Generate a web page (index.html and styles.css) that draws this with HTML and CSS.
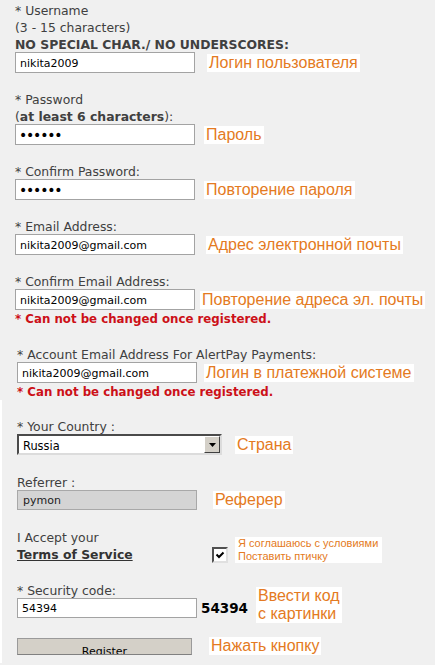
FILE: index.html
```html
<!DOCTYPE html>
<html lang="en">
<head>
<meta charset="utf-8">
<title>Registration</title>
<link rel="stylesheet" href="styles.css">
</head>
<body>
<form class="form">
  <div class="upper">
    <div class="field first">
      <div class="label">* Username</div>
      <div class="label">(3 - 15 characters)</div>
      <div class="label strong">NO SPECIAL CHAR./ NO UNDERSCORES:</div>
      <div class="row">
        <input class="input" type="text" value="nikita2009" readonly>
        <span class="note gap-12">Логин пользователя</span>
      </div>
    </div>
    <div class="field">
      <div class="label">* Password</div>
      <div class="label">(<b>at least 6 characters</b>):</div>
      <div class="row">
        <input class="input pass" type="password" value="123456" readonly>
        <span class="note gap-9">Пароль</span>
      </div>
    </div>
    <div class="field">
      <div class="label">* Confirm Password:</div>
      <div class="row">
        <input class="input pass" type="password" value="123456" readonly>
        <span class="note gap-9">Повторение пароля</span>
      </div>
    </div>
    <div class="field">
      <div class="label">* Email Address:</div>
      <div class="row">
        <input class="input" type="text" value="nikita2009@gmail.com" readonly>
        <span class="note gap-11">Адрес электронной почты</span>
      </div>
    </div>
    <div class="field">
      <div class="label">* Confirm Email Address:</div>
      <div class="row">
        <input class="input" type="text" value="nikita2009@gmail.com" readonly>
        <span class="note gap-5">Повторение адреса эл. почты</span>
      </div>
      <div class="warn">* Can not be changed once registered.</div>
    </div>
  </div>

  <div class="mid">
    <div class="field wide">
      <div class="label">* Account Email Address For AlertPay Payments:</div>
      <div class="row">
        <input class="input" type="text" value="nikita2009@gmail.com" readonly>
        <span class="note gap-7">Логин в платежной системе</span>
      </div>
      <div class="warn">* Can not be changed once registered.</div>
    </div>
  </div>

  <div class="lower">
    <div class="field country">
      <div class="label">* Your Country :</div>
      <div class="row">
        <div class="select">
          <span class="select-value">Russia</span>
          <span class="select-btn">
            <svg width="7" height="4" viewBox="0 0 7 4"><path d="M0 0H7L3.5 4Z" fill="#000"/></svg>
          </span>
        </div>
        <span class="note gap-13">Страна</span>
      </div>
    </div>
    <div class="field wide">
      <div class="label">Referrer :</div>
      <div class="row">
        <input class="input short disabled" type="text" value="pymon" readonly>
        <span class="note gap-16">Реферер</span>
      </div>
    </div>
    <div class="field wide">
      <div class="terms">
        <div class="terms-text">
          <div class="label">I Accept your</div>
          <div class="label"><a class="tos" href="#">Terms of Service</a></div>
        </div>
        <span class="checkbox">
          <svg width="12" height="12" viewBox="0 0 12 12"><path d="M2.5 5.5L5 8L9.5 3.5" fill="none" stroke="#000" stroke-width="2"/></svg>
        </span>
        <span class="note small gap-7">Я соглашаюсь с условиями<br>Поставить птичку</span>
      </div>
    </div>
    <div class="field wide">
      <div class="label">* Security code:</div>
      <div class="row">
        <input class="input short" type="text" value="54394" readonly>
        <span class="captcha">54394</span>
        <span class="note tall gap-8">Ввести код<br>с картинки</span>
      </div>
    </div>
    <div class="field wide">
      <div class="row flat">
        <button class="btn" type="button">Register</button>
        <span class="note gap-17">Нажать кнопку</span>
      </div>
    </div>
  </div>
</form>
</body>
</html>
```

FILE: styles.css
```css
html, body {
  margin: 0;
  padding: 0;
  background: #f0f0f0;
}

body {
  font-family: "DejaVu Sans", Verdana, sans-serif;
  font-size: 12.4px;
  color: #404040;
  height: 665px;
  overflow: hidden;
}

.form {
  margin: 0;
}

.upper {
  padding: 2px 0 0 15px;
}

.mid {
  padding-left: 17px;
}

.lower {
  border-left: 2px solid #fff;
  padding: 3px 0 0 15px;
  min-height: 260px;
}

.field {
  margin-top: 18px;
}

.field.first {
  margin-top: 0;
}

.field.wide {
  margin-top: 19px;
}

.field.country {
  margin-top: 15px;
}

.label {
  line-height: 17px;
  white-space: nowrap;
}

.label.strong,
.label b {
  font-weight: bold;
}

.row {
  display: flex;
  align-items: center;
  margin-top: -1px;
}

.row.flat {
  margin-top: 0;
}

.input {
  box-sizing: border-box;
  width: 180px;
  height: 21px;
  margin: 0;
  padding: 1px 4px 0;
  border: 1px solid #a3a3a3;
  background: #fff;
  font-family: "DejaVu Sans", Verdana, sans-serif;
  font-size: 11px;
  color: #000;
  outline: none;
}

.input.short {
  height: 20px;
}

.input.pass {
  font-size: 14px;
  letter-spacing: -1.2px;
  padding-left: 3px;
}

.input.disabled {
  background: #d4d4d4;
  border-color: #a8a8a8;
  color: #222;
  padding-left: 5px;
}

.note {
  display: inline-block;
  background: #fff;
  color: #e47a22;
  font-family: "Liberation Sans", Arial, sans-serif;
  font-size: 16px;
  line-height: 18px;
  padding: 0 2px;
  white-space: nowrap;
}

.note.small {
  font-size: 11px;
  line-height: 13px;
  padding: 0 4px 0 3px;
}

.note.tall {
  margin-top: -12px;
  margin-bottom: -6px;
}

.gap-5 { margin-left: 5px; }
.gap-7 { margin-left: 7px; }
.gap-8 { margin-left: 8px; }
.gap-9 { margin-left: 9px; }
.gap-11 { margin-left: 11px; }
.gap-12 { margin-left: 12px; }
.gap-13 { margin-left: 13px; }
.gap-16 { margin-left: 16px; }
.gap-17 { margin-left: 17px; }

.warn {
  margin-top: 2px;
  line-height: 15px;
  font-size: 11.8px;
  font-weight: bold;
  color: #cc1018;
  white-space: nowrap;
}

.select {
  box-sizing: border-box;
  width: 205px;
  height: 21px;
  display: flex;
  align-items: center;
  border-style: solid;
  border-width: 2px;
  border-color: #4a4a4a #dcdcdc #dcdcdc #4a4a4a;
  background: #fff;
  font-size: 11.4px;
  color: #000;
}

.select-value {
  flex: 1;
  padding: 2px 0 0 4px;
}

.select-btn {
  box-sizing: border-box;
  width: 16px;
  height: 17px;
  display: flex;
  align-items: center;
  justify-content: center;
  background: #d4d0c8;
  border-style: solid;
  border-width: 1px;
  border-color: #fff #404040 #404040 #fff;
}

.terms {
  display: flex;
  align-items: flex-end;
}

.terms-text {
  width: 195px;
}

.tos {
  color: #333;
  font-weight: bold;
  text-decoration: underline;
}

.checkbox {
  box-sizing: border-box;
  width: 16px;
  height: 16px;
  display: flex;
  align-items: center;
  justify-content: center;
  background: #fff;
  border-style: solid;
  border-width: 2px;
  border-color: #505050 #e0e0e0 #e0e0e0 #505050;
}

.captcha {
  margin-left: 4px;
  font-size: 13.5px;
  font-weight: bold;
  color: #000;
}

.btn {
  box-sizing: border-box;
  width: 175px;
  height: 17px;
  margin: 0;
  padding: 6px 0 0;
  overflow: hidden;
  background: #d4d0c8;
  border: 1px solid #9a9a9a;
  border-bottom-color: #808080;
  font-family: "DejaVu Sans", Verdana, sans-serif;
  font-size: 11px;
  line-height: 13px;
  color: #000;
  text-align: center;
  vertical-align: top;
}
```
